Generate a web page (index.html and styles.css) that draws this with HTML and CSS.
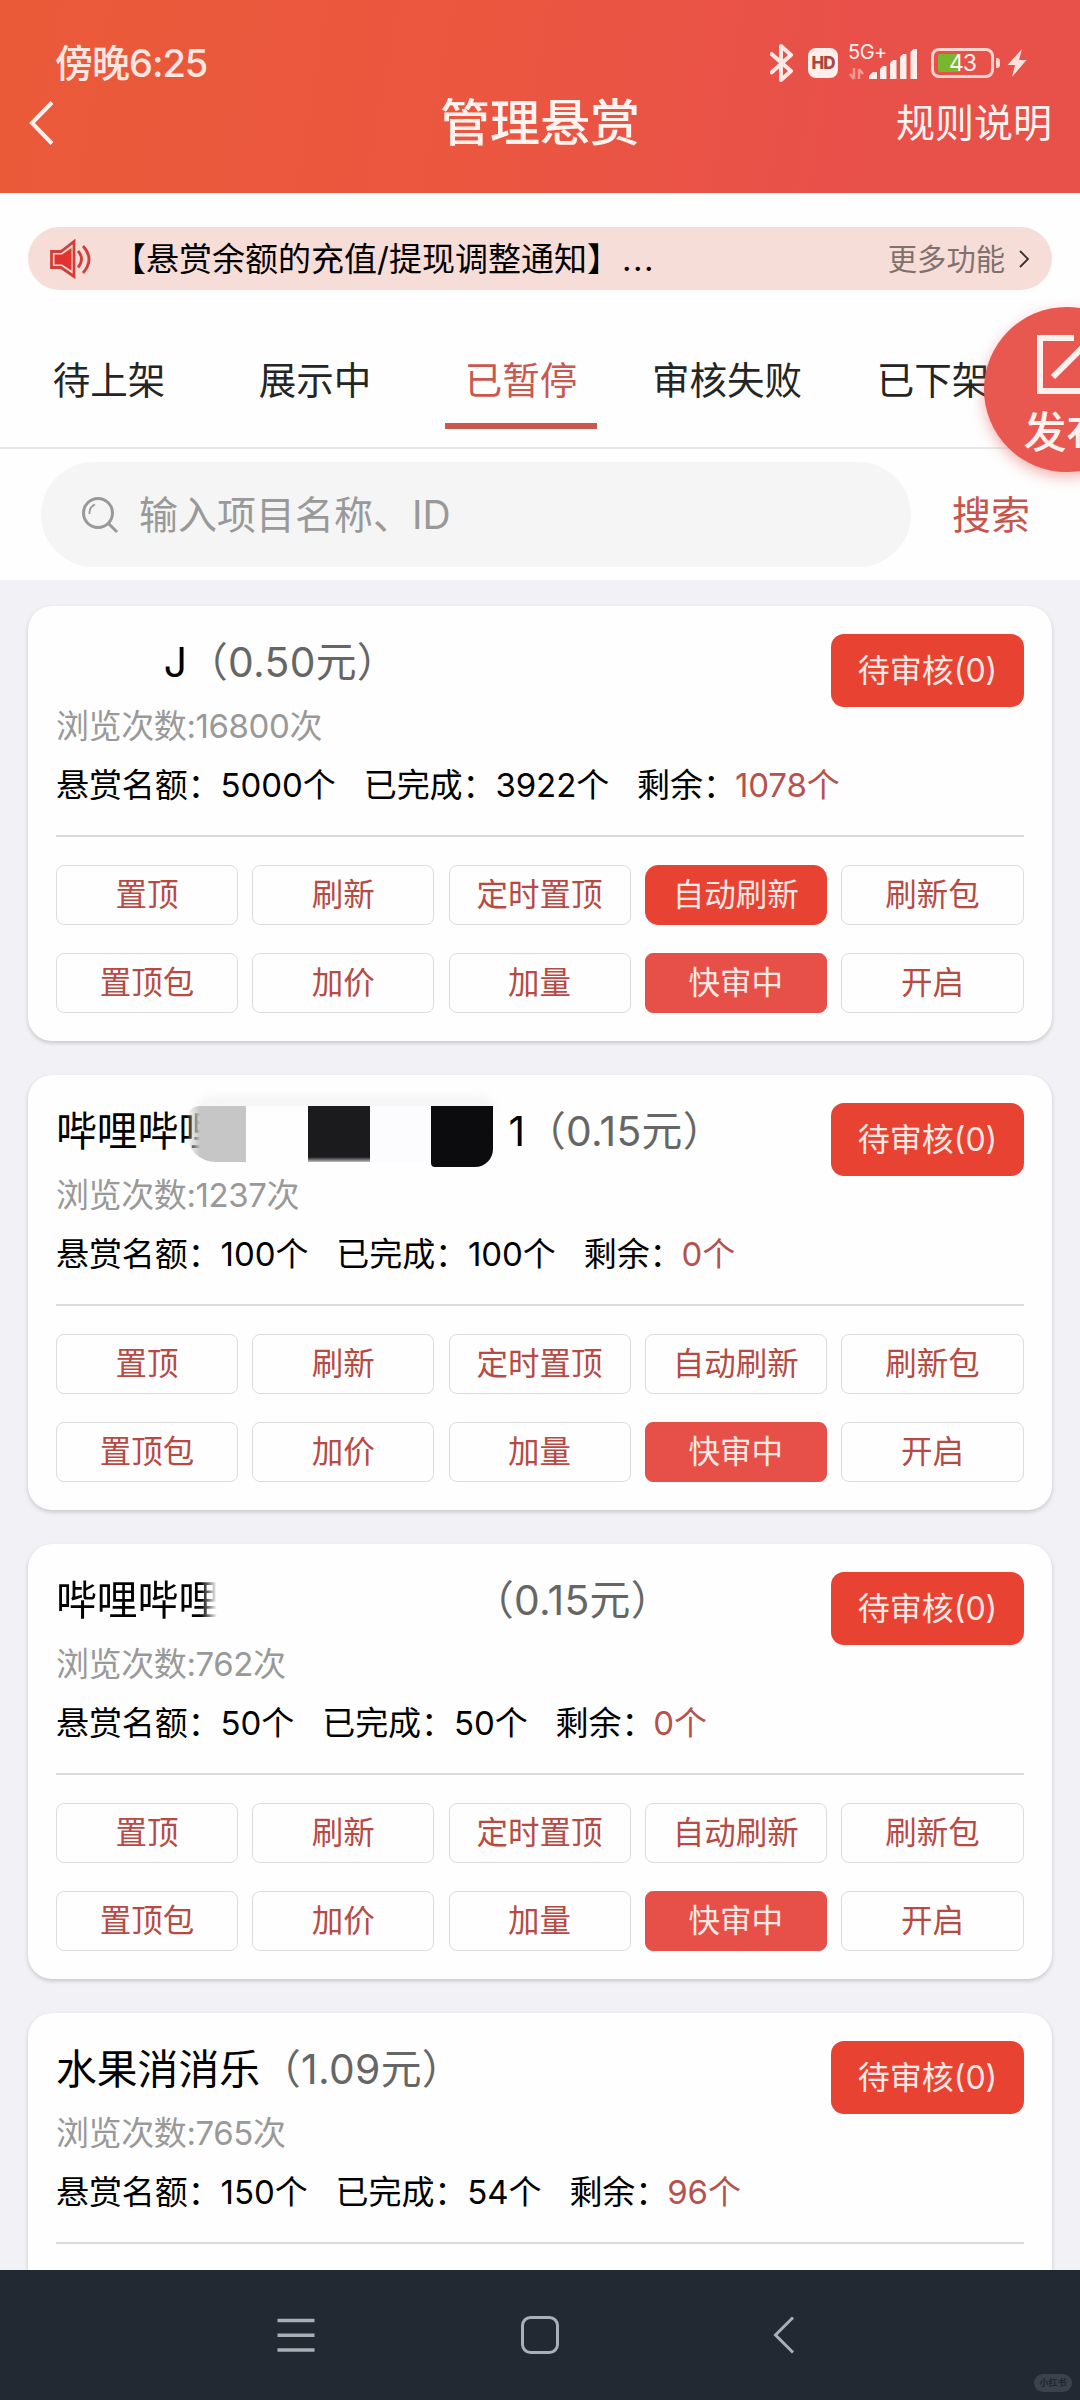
FILE: index.html
```html
<!DOCTYPE html>
<html lang="zh-CN">
<head>
<meta charset="utf-8">
<title>管理悬赏</title>
<link rel="stylesheet" href="styles.css">
</head>
<body>
<div class="screen">
  <header class="header">
    <div class="status">
      <span class="time">傍晚6:25</span>
      <div class="indicators">
        <svg class="bt" width="24" height="40" viewBox="0 0 24 40"><path d="M1.500 11 L21 28 L11 37 V3 L21 12 L1.500 29.500" fill="none" stroke="#ffe9e4" stroke-width="4" stroke-linejoin="round" stroke-linecap="round"/></svg>
        <span class="hd">HD</span>
        <div class="signal">
          <span class="net">5G+</span>
          <svg width="70" height="40" viewBox="0 0 70 40">
            <path d="M6 25v11M6 36l-4-5M11 36V26M11 26l4 5" stroke="#f39a90" stroke-width="2.500" fill="none"/>
            <g fill="#ffeeea"><path d="M21 36v-3l4-4h4v7z"/><path d="M32 36V26l3-3h3.500v13z"/><path d="M42 36V20l3-3h3.500v19z"/><path d="M52 36V14l3-3h3.500v25z"/><path d="M62.500 36V9l3-3H69v30z"/></g>
          </svg>
        </div>
        <div class="battery"><span class="charge"></span><span class="percent">43</span></div>
        <span class="tip"></span>
        <svg class="bolt" width="20" height="30" viewBox="0 0 20 30"><path d="M15 1 L0.500 17 H8 L5 29 L19.500 12 H12 Z" fill="#ffe0db"/></svg>
      </div>
    </div>
    <div class="titlebar">
      <svg class="back" width="26" height="46" viewBox="0 0 26 46"><path d="M24 2.500 L4 23 L24 43.500" fill="none" stroke="#fff3ef" stroke-width="4"/></svg>
      <h1>管理悬赏</h1>
      <a class="rules">规则说明</a>
    </div>
  </header>

  <section class="top">
    <div class="notice">
      <svg width="44" height="40" viewBox="0 0 44 40" fill="none" stroke="#d23f3a" stroke-width="2.800">
        <path d="M2.500 12.500 H12 L25 2.500 V37.500 L12 28.500 H2.500 Z"/>
        <path d="M5.500 15.500 H13 L22.500 9 V31.500 L13 25.500 H5.500 Z" fill="#e0332e" stroke="none"/>
        <path d="M29 12 Q36 20 29 28.500 M34 7 Q46 20 34 34"/>
      </svg>
      <span class="notice-text">【悬赏余额的充值/提现调整通知】<span class="dots">...</span></span>
      <span class="more">更多功能</span>
      <svg class="chev" width="12" height="20" viewBox="0 0 12 20"><path d="M2 2 L10 10 L2 18" fill="none" stroke="#3a3030" stroke-width="1.800"/></svg>
    </div>
    <nav class="tabs">
      <span class="tab">待上架</span>
      <span class="tab">展示中</span>
      <span class="tab active">已暂停</span>
      <span class="tab">审核失败</span>
      <span class="tab">已下架</span>
    </nav>
    <div class="search">
      <div class="field">
        <svg width="38" height="38" viewBox="0 0 38 38" fill="none" stroke="#999" stroke-width="3"><circle cx="17" cy="17" r="14.500"/><path d="M27 27 L36 36"/><path d="M8.500 18 Q8 11 14 8.500" stroke-width="1.800"/></svg>
        <span>输入项目名称、ID</span>
      </div>
      <a class="go">搜索</a>
    </div>
    <div class="fab">
      <svg width="60" height="60" viewBox="0 0 60 60" fill="none" stroke="#fff1ee" stroke-width="6"><path d="M37 3 H3 V56 H57 V28"/><path d="M16 42 L54 4"/></svg>
      <span>发布</span>
    </div>
  </section>

  <main class="list">
    <article class="card">
      <div class="head">
        <div class="name w-short"><span>J</span></div>
        <div class="price">（0.50元）</div>
        <a class="pending">待审核(0)</a>
      </div>
      <p class="views">浏览次数:16800次</p>
      <p class="stats"><span>悬赏名额：5000个</span><span>已完成：3922个</span><span>剩余：<em>1078个</em></span></p>
      <div class="actions">
        <a>置顶</a><a>刷新</a><a>定时置顶</a><a class="on">自动刷新</a><a>刷新包</a>
        <a>置顶包</a><a>加价</a><a>加量</a><a class="fast">快审中</a><a>开启</a>
      </div>
    </article>

    <article class="card">
      <div class="head">
        <div class="name w-long">
          <span>哔哩哔哩</span><span>1</span>
          <div class="mosaic"><i class="haze"></i><i class="m1"></i><i class="m2"></i><i class="m3"></i><i class="m4"></i><i class="m5"></i></div>
        </div>
        <div class="price">（0.15元）</div>
        <a class="pending">待审核(0)</a>
      </div>
      <p class="views">浏览次数:1237次</p>
      <p class="stats"><span>悬赏名额：100个</span><span>已完成：100个</span><span>剩余：<em>0个</em></span></p>
      <div class="actions">
        <a>置顶</a><a>刷新</a><a>定时置顶</a><a>自动刷新</a><a>刷新包</a>
        <a>置顶包</a><a>加价</a><a>加量</a><a class="fast">快审中</a><a>开启</a>
      </div>
    </article>

    <article class="card">
      <div class="head">
        <div class="name w-mid"><span class="fade">哔哩哔哩</span></div>
        <div class="price">（0.15元）</div>
        <a class="pending">待审核(0)</a>
      </div>
      <p class="views">浏览次数:762次</p>
      <p class="stats"><span>悬赏名额：50个</span><span>已完成：50个</span><span>剩余：<em>0个</em></span></p>
      <div class="actions">
        <a>置顶</a><a>刷新</a><a>定时置顶</a><a>自动刷新</a><a>刷新包</a>
        <a>置顶包</a><a>加价</a><a>加量</a><a class="fast">快审中</a><a>开启</a>
      </div>
    </article>

    <article class="card">
      <div class="head">
        <div class="name"><span>水果消消乐</span></div>
        <div class="price">（1.09元）</div>
        <a class="pending">待审核(0)</a>
      </div>
      <p class="views">浏览次数:765次</p>
      <p class="stats"><span>悬赏名额：150个</span><span>已完成：54个</span><span>剩余：<em>96个</em></span></p>
      <div class="actions"></div>
    </article>
  </main>

  <footer class="navbar">
    <svg width="40" height="40" viewBox="0 0 40 40" fill="none" stroke="#a9afb7" stroke-width="3.500"><path d="M1.500 5.500H38.500M1.500 20.300H38.500M1.500 35H38.500"/></svg>
    <svg width="40" height="40" viewBox="0 0 40 40" fill="none" stroke="#a9afb7" stroke-width="3"><rect x="2.500" y="2.500" width="35" height="35" rx="8"/></svg>
    <svg width="40" height="40" viewBox="0 0 40 40" fill="none" stroke="#a9afb7" stroke-width="3"><path d="M29 2.500 L11.500 20 L29 37.500"/></svg>
    <span class="mark">小红书</span>
  </footer>
</div>
</body>
</html>
```
FILE: styles.css
```css
* { box-sizing: border-box; }
body {
  margin: 0;
  font-family: Inter, "Noto Sans CJK SC", sans-serif;
  color: #000;
  background: #f2f1f6;
}
p, h1 { margin: 0; }
i, em { font-style: normal; }
.screen {
  position: relative;
  width: 1080px;
  height: 2400px;
  overflow: hidden;
  display: flex;
  flex-direction: column;
  white-space: nowrap;
}

/* header */
.header {
  flex: none;
  height: 193px;
  padding-top: 43px;
  background: linear-gradient(100deg, #ea5a38 0%, #eb5640 45%, #e8504a 80%, #e8504a 100%);
  color: #fff3ef;
}
.status {
  display: flex;
  justify-content: space-between;
  align-items: center;
  height: 40px;
  padding: 0 53px 0 55px;
}
.time { font-size: 38px; line-height: 40px; letter-spacing: -1px; color: #ffe6e0; font-weight: 500; }
.indicators { display: flex; align-items: center; height: 40px; }
.hd {
  width: 30px;
  height: 30px;
  margin: 0 10px 0 14px;
  border-radius: 8px;
  background: #ffeeea;
  color: #a8473f;
  font-size: 17px;
  font-weight: 800;
  letter-spacing: -1px;
  line-height: 30px;
  text-align: center;
}
.signal { position: relative; width: 70px; height: 40px; }
.net { position: absolute; left: 0; top: -1px; font-size: 20px; line-height: 20px; letter-spacing: -.5px; }
.battery {
  position: relative;
  width: 63px;
  height: 30px;
  margin-left: 13px;
  border: 3px solid #ffd5cf;
  border-radius: 8px;
  display: flex;
  align-items: center;
  justify-content: center;
}
.charge { position: absolute; left: 4px; top: 3px; width: 22px; height: 18px; border-radius: 2px; background: #77b82e; }
.percent { position: relative; font-size: 23px; line-height: 24px; letter-spacing: -1px; }
.tip { width: 4px; height: 10px; margin-left: 2px; border-radius: 0 3px 3px 0; background: #ffd5cf; }
.bolt { margin-left: 7px; }

.titlebar {
  display: grid;
  grid-template-columns: 1fr auto 1fr;
  align-items: center;
  height: 80px;
  padding: 0 28px;
}
h1 { font-size: 50px; font-weight: 500; line-height: 60px; }
.rules { justify-self: end; font-size: 39px; line-height: 50px; font-weight: 400; }

/* notice, tabs, search */
.top { position: relative; flex: none; height: 387px; padding-top: 34px; background: #fefefe; }
.notice {
  display: flex;
  align-items: center;
  height: 63px;
  margin: 0 28px;
  padding: 0 22px 0 21px;
  border-radius: 32px;
  background: #f7ddd7;
}
.notice-text { margin-left: 20px; padding-bottom: 4px; font-size: 33px; flex: 1; }
.dots { letter-spacing: 1.500px; margin-left: 2px; }
.more { margin-right: 13px; padding-bottom: 3px; font-size: 29.300px; color: #80716d; }
.tabs {
  display: grid;
  grid-template-columns: repeat(5, 206px);
  height: 159px;
  padding: 0 6px;
  border-bottom: 2px solid #e9e9e9;
}
.tab {
  justify-self: center;
  height: 139px;
  padding-top: 51px;
  font-size: 37.500px;
  line-height: 80px;
  color: #252525;
}
.tab.active { width: 152px; text-align: center; color: #ca5851; border-bottom: 6px solid #ca5851; }
.search { display: flex; align-items: center; height: 131px; padding: 0 0 0 41px; }
.field {
  display: flex;
  align-items: center;
  width: 870px;
  height: 105px;
  padding-left: 40px;
  border-radius: 53px;
  background: #f5f5f5;
  color: #999;
  font-size: 39px;
}
.field span { margin-left: 20px; padding-bottom: 6px; }
.go { margin-left: 41px; padding-bottom: 6px; font-size: 39px; color: #c9544c; }
.fab {
  position: absolute;
  left: 984px;
  top: 114px;
  width: 165px;
  height: 165px;
  border-radius: 50%;
  background: #e95751;
  box-shadow: 0 5px 14px rgba(233, 87, 81, .45);
  display: flex;
  flex-direction: column;
  align-items: center;
  padding-top: 28px;
  color: #fff1ee;
}
.fab span { margin-top: 12px; font-size: 43px; line-height: 50px; font-weight: 500; }

/* cards */
.list { flex: 1; min-height: 0; overflow: hidden; padding: 26px 28px 0; }
.card {
  height: 435px;
  margin-bottom: 34px;
  padding: 28px;
  border-radius: 24px;
  background: #fefefe;
  box-shadow: 0 2px 4px rgba(0, 0, 0, .18);
}
.head { display: flex; align-items: flex-start; height: 71px; font-size: 40.800px; line-height: 57px; }
.name { position: relative; display: flex; justify-content: space-between; }
.w-short { width: 131px; justify-content: flex-end; }
.w-long { width: 469px; }
.w-mid { width: 417px; }
.price { color: #666; letter-spacing: .3px; }
.pending {
  width: 193px;
  height: 73px;
  margin-left: auto;
  border-radius: 13px;
  background: #e84233;
  color: #ffe9e4;
  font-size: 32px;
  line-height: 73px;
  text-align: center;
}
.fade {
  -webkit-mask-image: linear-gradient(90deg, #000 145px, transparent 161px);
  mask-image: linear-gradient(90deg, #000 145px, transparent 161px);
}
.mosaic { position: absolute; left: 0; top: 0; }
.mosaic i { position: absolute; top: 3px; height: 56px; width: 62px; }
.mosaic .haze { left: 140px; top: -8px; width: 300px; height: 16px; background: #f6f6f6; border-radius: 16px 16px 0 0; filter: blur(3px); }
.mosaic .m1 { left: 130px; width: 60px; background: linear-gradient(90deg, rgba(198, 198, 198, 0), #c6c6c6 14px); border-radius: 14px 0 0 30px; }
.mosaic .m2 { left: 190px; background: #fefefe; }
.mosaic .m3 { left: 252px; background: linear-gradient(#1b1b1d 51px, #fefefe 58px); }
.mosaic .m4 { left: 314px; background: #fcfcff; }
.mosaic .m5 { left: 375px; height: 61px; background: #0c0c0e; border-radius: 0 0 18px 4px; }
.views { height: 42px; font-size: 33px; line-height: 42px; letter-spacing: -.4px; color: #999; }
.stats {
  display: flex;
  gap: 28px;
  height: 90px;
  padding-top: 14px;
  font-size: 33px;
  line-height: 48px;
  letter-spacing: -.08px;
}
.stats em { color: #b5524e; margin-left: -1px; }
.actions {
  display: grid;
  grid-template-columns: repeat(4, 182px) 183px;
  justify-content: space-between;
  grid-auto-rows: 60px;
  row-gap: 28px;
  margin-top: -2px;
  padding-top: 28px;
  border-top: 2px solid #dadada;
}
.actions a {
  border: 1px solid #dcdcdc;
  border-radius: 8px;
  font-size: 31.500px;
  line-height: 58px;
  text-align: center;
  color: #b74a43;
}
.actions .on { background: #e84233; border-color: #e84233; border-radius: 13px; color: #ffe9e4; }
.actions .fast { background: #e75049; border-color: #e75049; color: #ffe9e4; }

/* system navigation */
.navbar {
  position: relative;
  flex: none;
  display: flex;
  justify-content: center;
  gap: 204px;
  height: 130px;
  padding-top: 45px;
  background: #222932;
}
.mark {
  position: absolute;
  left: 1034px;
  top: 104px;
  width: 38px;
  height: 18px;
  border-radius: 9px;
  background: #3b424b;
  color: #20262e;
  font-size: 9px;
  line-height: 17px;
  text-align: center;
  font-weight: 700;
}
```
